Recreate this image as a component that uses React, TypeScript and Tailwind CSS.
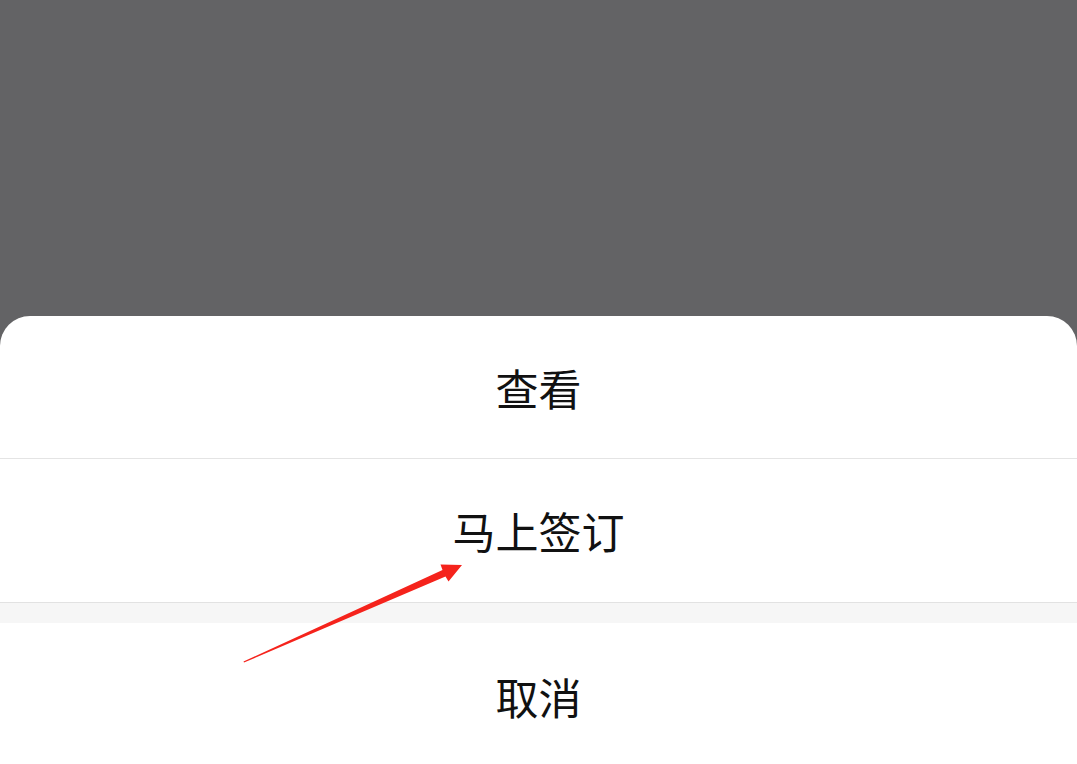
import React from 'react';

const items = ['查看', '马上签订'];

export default function App() {
  return (
    <div
      className="relative w-[1077px] h-[764px] overflow-hidden bg-[#636365] flex flex-col"
      style={{ fontFamily: '"Noto Sans CJK SC", "Noto Sans", sans-serif' }}
    >
      <div className="h-[316px] shrink-0" />
      <div className="flex-1 bg-white rounded-t-[30px] flex flex-col">
        {items.map((label, i) => (
          <div
            key={label}
            className={`h-[143px] shrink-0 flex items-center justify-center text-[43px] text-[#111] ${
              i === 0 ? 'border-b border-[#e4e4e4]' : ''
            }`}
          >
            {label}
          </div>
        ))}
        <div className="h-[21px] shrink-0 bg-[#f6f6f6] border-t border-[#e2e2e2]" />
        <div className="h-[146px] shrink-0 flex items-center justify-center text-[43px] text-[#111]">
          取消
        </div>
      </div>
      <svg className="absolute inset-0 pointer-events-none" width="1077" height="764" viewBox="0 0 1077 764">
        <polygon
          points="244,662.5 445.5,576.5 448.5,581.5 462,565 440.5,564.5 442.5,570 243.5,661.5"
          fill="#f5231c"
        />
      </svg>
    </div>
  );
}
